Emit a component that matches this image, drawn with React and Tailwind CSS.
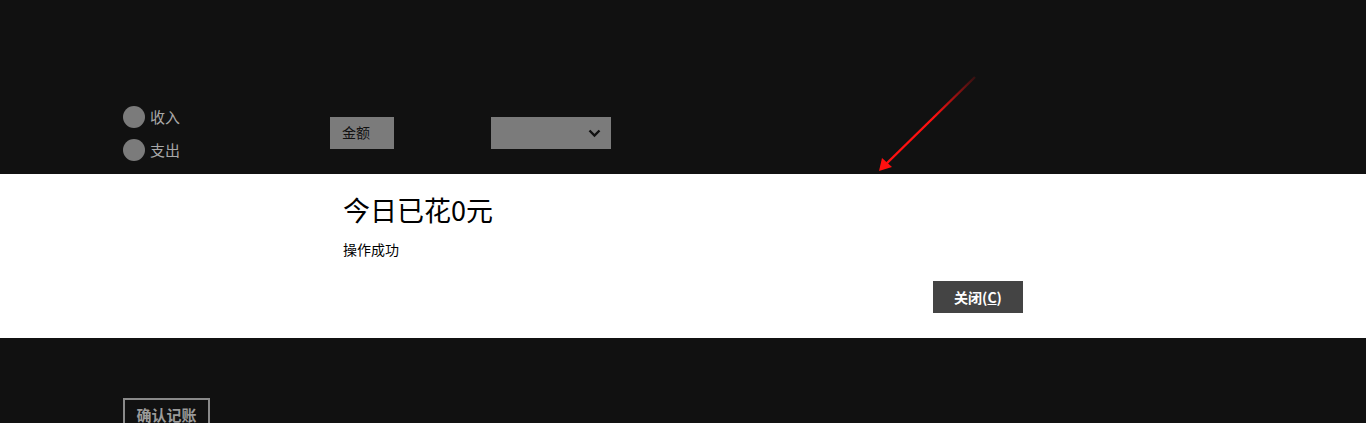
import React from "react";

const font = { fontFamily: '"Microsoft YaHei", "Noto Sans CJK SC", sans-serif' };

export default function App() {
  return (
    <div className="relative h-[423px] w-full overflow-hidden bg-[#111111]" style={font}>
      {/* form row */}
      <div className="flex h-[174px] items-start pl-[123px] pt-[106px]">
        <div className="flex w-[207px] flex-col gap-[11px]">
          <label className="flex items-center gap-[5px] text-[15px] leading-[22px] text-[#a8a8a8]">
            <span className="h-[22px] w-[22px] rounded-full bg-[#7b7b7b]"></span>
            收入
          </label>
          <label className="flex items-center gap-[5px] text-[15px] leading-[22px] text-[#a8a8a8]">
            <span className="h-[22px] w-[22px] rounded-full bg-[#7b7b7b]"></span>
            支出
          </label>
        </div>
        <div className="mt-[11px] flex h-[32px] w-[64px] items-center bg-[#7b7b7b] pb-[2px] pl-[12px] text-[14px] text-[#111]">
          金额
        </div>
        <div className="ml-[97px] mt-[11px] flex h-[32px] w-[120px] items-center justify-end bg-[#7b7b7b] pr-[10px]">
          <svg width="13" height="9" viewBox="0 0 13 9" fill="none">
            <path d="M1.5 1.5 L6.5 6.5 L11.5 1.5" stroke="#111" strokeWidth="2.4" />
          </svg>
        </div>
      </div>

      {/* dialog band */}
      <div className="flex h-[164px] flex-col bg-white pl-[343px] pt-[16px]">
        <div className="text-[27px] leading-[40px] text-black">今日已花0元</div>
        <div className="mt-[9px] text-[14px] leading-[20px] text-black">操作成功</div>
        <div className="mt-[22px] pl-[590px]">
          <button className="flex h-[32px] w-[90px] items-center justify-center bg-[#444444] text-[14px] font-bold text-white">
            关闭(<span className="underline">C</span>)
          </button>
        </div>
      </div>

      {/* bottom */}
      <div className="pl-[123px] pt-[60px]">
        <button className="h-[34px] w-[87px] border-2 border-[#8a8a8a] text-[15px] font-bold text-[#9a9a9a]">
          确认记账
        </button>
      </div>

      {/* red arrow */}
      <svg className="absolute left-[870px] top-[70px]" width="115" height="110" viewBox="0 0 115 110">
        <defs>
          <linearGradient id="g" x1="1" y1="0" x2="0" y2="1">
            <stop offset="0" stopColor="#ff1010" stopOpacity="0.15" />
            <stop offset="0.45" stopColor="#ff1010" stopOpacity="1" />
          </linearGradient>
        </defs>
        <path d="M105 7 L14 96" stroke="url(#g)" strokeWidth="2.4" />
        <path d="M9 101 L12 88 L22 97 Z" fill="#ff1010" />
      </svg>
    </div>
  );
}
